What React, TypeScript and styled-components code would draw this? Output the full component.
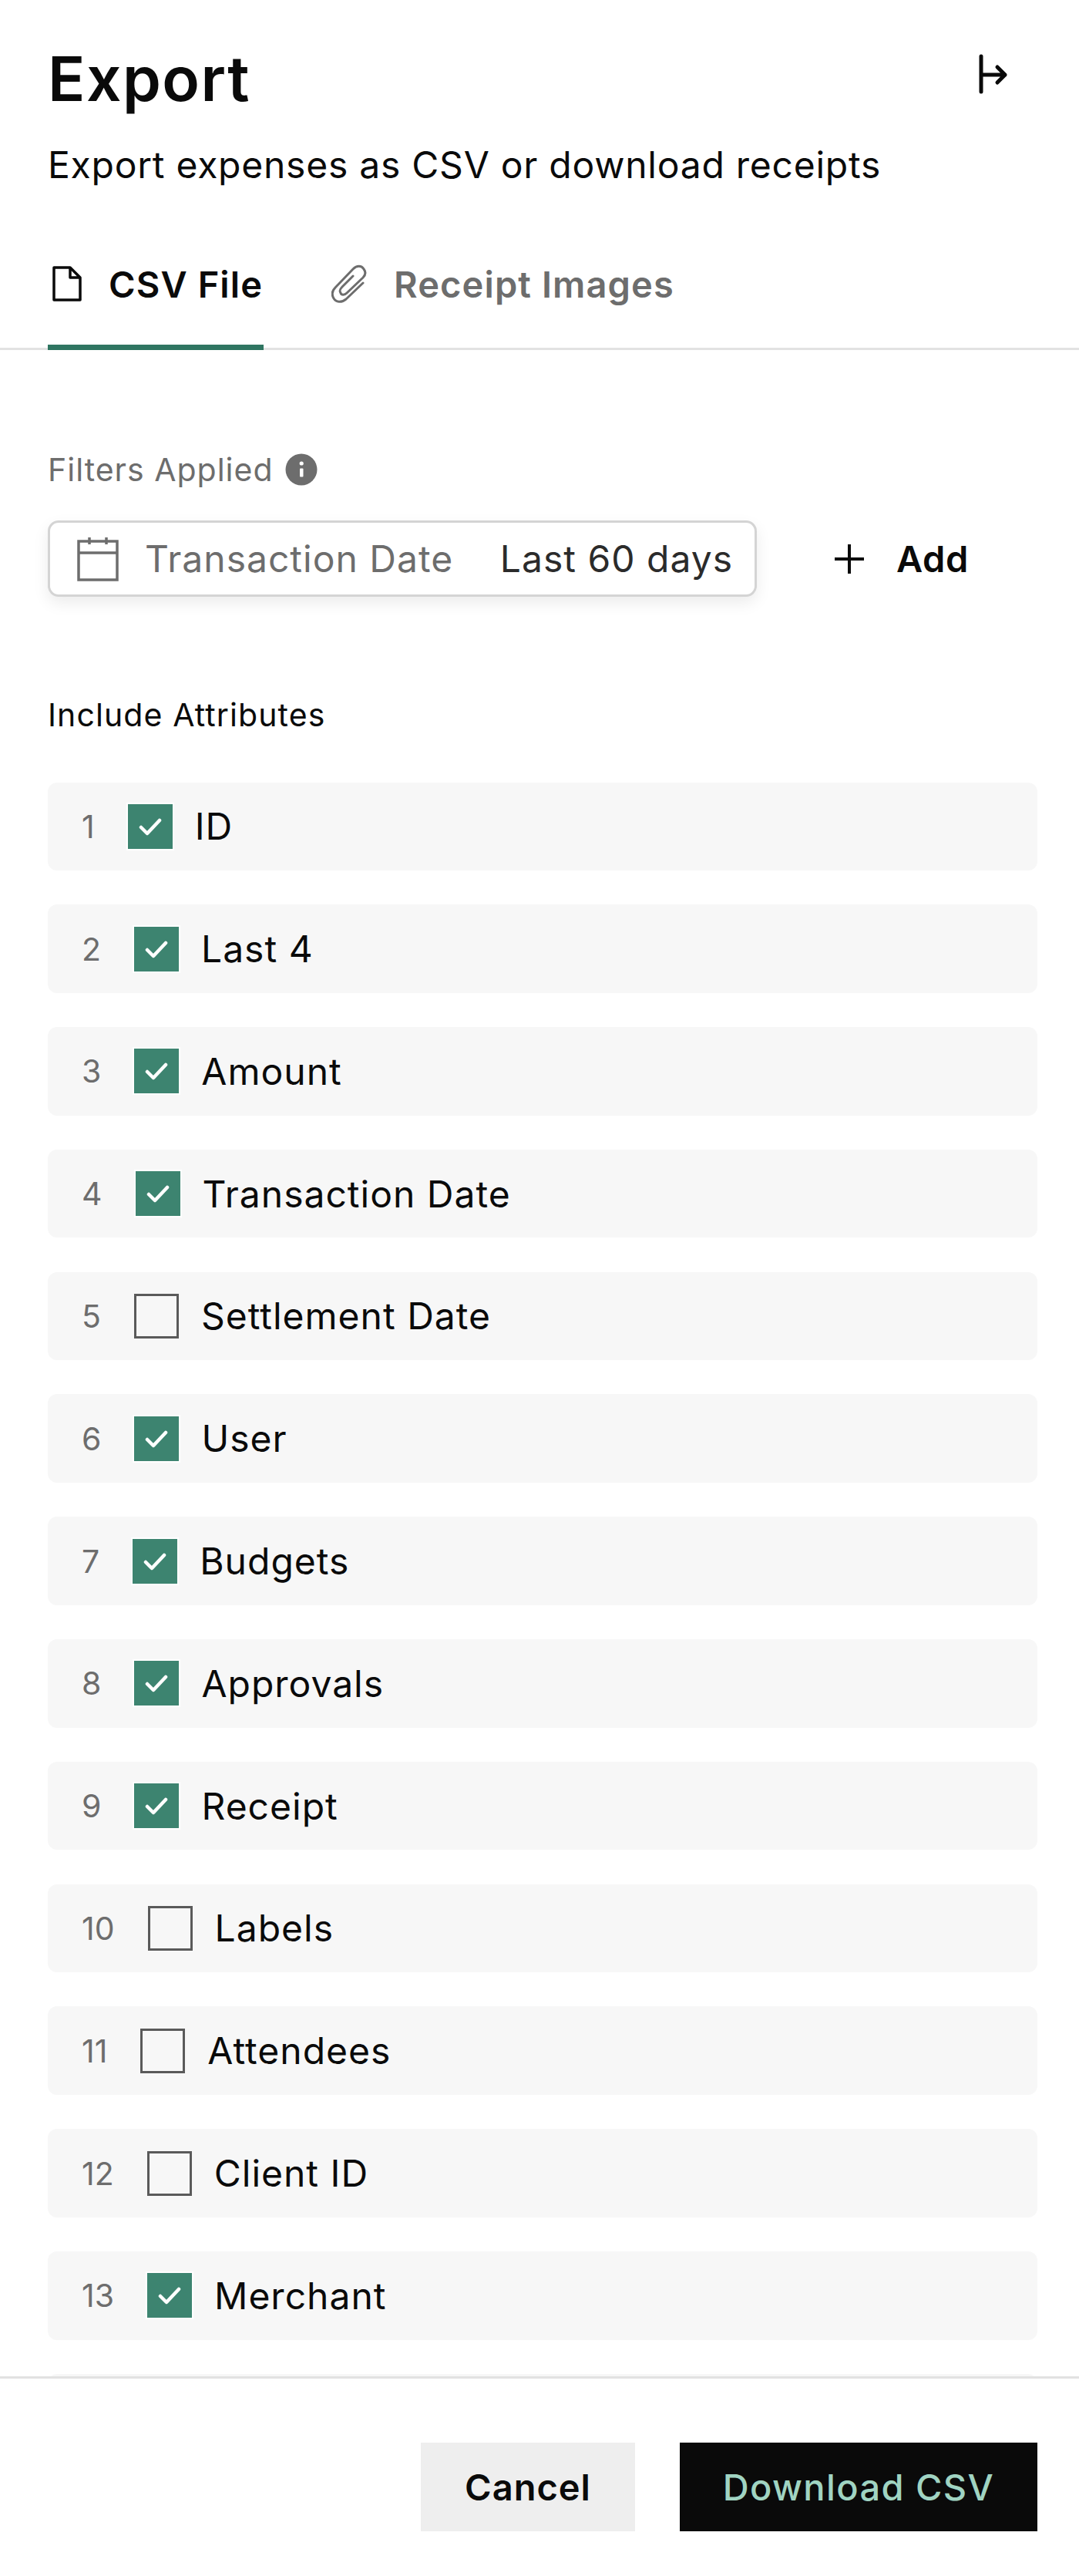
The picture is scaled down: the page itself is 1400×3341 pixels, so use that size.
import React from 'react';
import styled, { createGlobalStyle } from 'styled-components';

const GlobalStyle = createGlobalStyle`
	html, body {
		margin: 0;
		padding: 0;
		background: #fff;
	}
	* {
		box-sizing: border-box;
	}
	body {
		font-family: Inter, "Liberation Sans", sans-serif;
		color: #0a0a0a;
	}
`;

const Page = styled.div`
	width: 1400px;
	height: 3341px;
	display: flex;
	flex-direction: column;
	background: #fff;
	overflow: hidden;
`;

const Header = styled.header`
	height: 454px;
	display: flex;
	flex-direction: column;
	padding: 60px 62px 0;
	border-bottom: 3px solid #e2e2e2;
`;

const TitleRow = styled.div`
	display: flex;
	justify-content: space-between;
	align-items: flex-start;
	height: 84px;
`;

const Title = styled.h1`
	margin: 0;
	font-size: 80px;
	line-height: 84px;
	font-weight: 600;
	letter-spacing: 1.5px;
`;

const CloseButton = styled.button`
	width: 48px;
	height: 54px;
	margin: 10px 23px 0 0;
	padding: 0;
	border: 0;
	background: none;
	color: #0a0a0a;
`;

const Subtitle = styled.p`
	margin: 41px 0 0;
	font-size: 48px;
	line-height: 58px;
	letter-spacing: 0.75px;
`;

const Tabs = styled.nav`
	display: flex;
	gap: 82px;
	margin-top: 77px;
`;

const Tab = styled.div<{ $active?: boolean }>`
	display: flex;
	align-items: center;
	gap: 35px;
	height: 134px;
	padding: 0 1px 31px 6px;
	font-size: 47px;
	font-weight: 600;
	letter-spacing: 1.1px;
	color: ${(p) => (p.$active ? '#0a0a0a' : '#6d6d6d')};
	border-bottom: 7px solid ${(p) => (p.$active ? '#2f7561' : 'transparent')};
`;

const Section = styled.section`
	padding: 0 54px 0 62px;
`;

const FiltersLabel = styled.div`
	display: flex;
	align-items: center;
	gap: 15px;
	margin-top: 131px;
	height: 48px;
	font-size: 41px;
	letter-spacing: 1px;
	color: #6d6d6d;
`;

const FilterRow = styled.div`
	display: flex;
	align-items: center;
	margin-top: 42px;
`;

const FilterChip = styled.div`
	display: flex;
	align-items: center;
	width: 920px;
	height: 99px;
	padding: 0 28px 0 35px;
	border: 3px solid #d4d4d4;
	border-radius: 14px;
	background: #fff;
	box-shadow: 0 8px 20px rgba(0, 0, 0, 0.08);
	font-size: 48px;
	letter-spacing: 1px;
`;

const FilterName = styled.span`
	margin-left: 34px;
	color: #6d6d6d;
	flex: 1;
`;

const FilterValue = styled.span`
	color: #2b2b2b;
`;

const AddButton = styled.div`
	display: flex;
	align-items: center;
	gap: 41px;
	margin-left: 100px;
	font-size: 47px;
	font-weight: 600;
	letter-spacing: 0.6px;
`;

const AttributesLabel = styled.div`
	margin-top: 129px;
	height: 48px;
	line-height: 48px;
	font-size: 41px;
	letter-spacing: 1.1px;
`;

const ScrollArea = styled.div`
	height: 2131px;
	padding: 63.5px 54px 0 62px;
	overflow: hidden;
	display: flex;
	flex-direction: column;
	gap: 44.3px;
	flex-shrink: 0;
`;

const Row = styled.div`
	display: flex;
	align-items: center;
	flex-shrink: 0;
	height: 114.5px;
	padding-left: 44px;
	background: #f7f7f7;
	border-radius: 12px;
`;

const RowNumber = styled.span`
	font-size: 41px;
	color: #6d6d6d;
`;

const CheckBox = styled.span<{ $checked: boolean }>`
	display: flex;
	align-items: center;
	justify-content: center;
	width: 58px;
	height: 58px;
	margin: 0 29px 0 43px;
	flex-shrink: 0;
	background: ${(p) => (p.$checked ? '#3d8470' : 'transparent')};
	border: 3px solid ${(p) => (p.$checked ? '#3d8470' : '#5a5a5a')};
	box-shadow: ${(p) => (p.$checked ? '0 0 0 2px #fff' : 'none')};
`;

const RowLabel = styled.span`
	font-size: 48px;
	letter-spacing: 1px;
	color: #0a0a0a;
`;

const Footer = styled.footer`
	flex: 1;
	display: flex;
	justify-content: flex-end;
	gap: 58px;
	padding: 83px 54px 0 0;
	border-top: 3px solid #e2e2e2;
`;

const FooterButton = styled.button<{ $primary?: boolean }>`
	height: 115px;
	padding: 0;
	width: ${(p) => (p.$primary ? '464px' : '278px')};
	border: 0;
	font-family: inherit;
	font-size: 47px;
	font-weight: ${(p) => (p.$primary ? 500 : 600)};
	letter-spacing: ${(p) => (p.$primary ? '1.4px' : '1px')};
	background: ${(p) => (p.$primary ? '#0a0a0a' : '#eeeeee')};
	color: ${(p) => (p.$primary ? '#a0d4c2' : '#0a0a0a')};
`;

const attributes = [
	{ name: 'ID', on: true },
	{ name: 'Last 4', on: true },
	{ name: 'Amount', on: true },
	{ name: 'Transaction Date', on: true },
	{ name: 'Settlement Date', on: false },
	{ name: 'User', on: true },
	{ name: 'Budgets', on: true },
	{ name: 'Approvals', on: true },
	{ name: 'Receipt', on: true },
	{ name: 'Labels', on: false },
	{ name: 'Attendees', on: false },
	{ name: 'Client ID', on: false },
	{ name: 'Merchant', on: true },
];

const App: React.FC = () => {
	return (
		<Page>
			<GlobalStyle />
			<Header>
				<TitleRow>
					<Title>Export</Title>
					<CloseButton>
						<svg width="48" height="54" viewBox="0 0 48 54" fill="none" stroke="currentColor" strokeWidth="5" strokeLinecap="round" strokeLinejoin="round">
							<path d="M6 3v46M6 27h31M27 17l10 10-10 10" />
						</svg>
					</CloseButton>
				</TitleRow>
				<Subtitle>Export expenses as CSV or download receipts</Subtitle>
				<Tabs>
					<Tab $active>
						<svg width="38" height="46" viewBox="0 0 38 46" fill="none" stroke="currentColor" strokeWidth="3.5" strokeLinejoin="round">
							<path d="M2 2h21l13 13v29H2zM23 2v13h13" />
						</svg>
						CSV File
					</Tab>
					<Tab>
						<svg width="46" height="50" viewBox="0 0 46 50" fill="none" stroke="currentColor" strokeWidth="3" strokeLinecap="round">
							<path d="M41 24L19 45C13 50 6 49 3 44 0 39 1 34 5 30L28 6C33 1 39 1 42 6 45 10 44 14 41 17L20 37C17 40 13 40 12 37 10 34 11 32 14 29L28 15" />
						</svg>
						Receipt Images
					</Tab>
				</Tabs>
			</Header>
			<Section>
				<FiltersLabel>
					Filters Applied
					<svg width="42" height="42" viewBox="0 0 42 42">
						<circle cx="21" cy="21" r="20.5" fill="#6d6d6d" />
						<rect x="19" y="19.5" width="4.5" height="11" rx="1" fill="#fff" />
						<circle cx="21.2" cy="13" r="2.6" fill="#fff" />
					</svg>
				</FiltersLabel>
				<FilterRow>
					<FilterChip>
						<svg width="54" height="58" viewBox="0 0 54 58" fill="none" stroke="#6d6d6d" strokeWidth="3.5">
							<path d="M2 6h50v50H2zM2 21h50M16 1v9M38 1v9" />
						</svg>
						<FilterName>Transaction Date</FilterName>
						<FilterValue>Last 60 days</FilterValue>
					</FilterChip>
					<AddButton>
						<svg width="40" height="40" viewBox="0 0 40 40" fill="none" stroke="currentColor" strokeWidth="4">
							<path d="M20 1v38M1 20h38" />
						</svg>
						Add
					</AddButton>
				</FilterRow>
				<AttributesLabel>Include Attributes</AttributesLabel>
			</Section>
			<ScrollArea>
				{attributes.map((a, i) => (
					<Row key={a.name}>
						<RowNumber>{i + 1}</RowNumber>
						<CheckBox $checked={a.on}>
							{a.on && (
								<svg width="30" height="24" viewBox="0 0 30 24" fill="none" stroke="#fff" strokeWidth="4.5" strokeLinecap="round" strokeLinejoin="round">
									<path d="M3 13l8 8L27 4" />
								</svg>
							)}
						</CheckBox>
						<RowLabel>{a.name}</RowLabel>
					</Row>
				))}
				<Row />
			</ScrollArea>
			<Footer>
				<FooterButton>Cancel</FooterButton>
				<FooterButton $primary>Download CSV</FooterButton>
			</Footer>
		</Page>
	);
};

export default App;
